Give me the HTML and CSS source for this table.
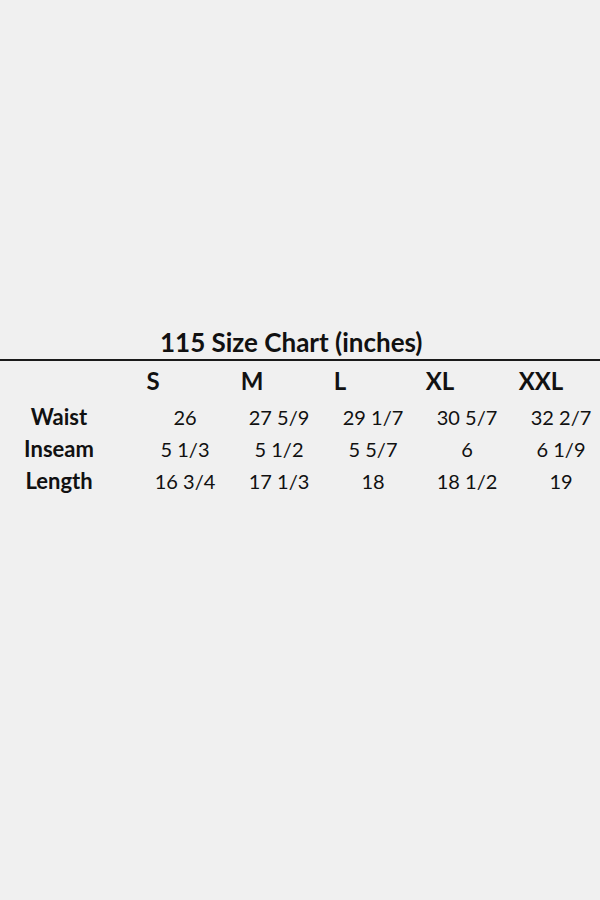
FILE: index.html
```html
<!DOCTYPE html>
<html>
<head>
<meta charset="utf-8">
<link rel="stylesheet" href="styles.css">
</head>
<body>
<div class="chart">
  <div class="title">115 Size Chart (inches)</div>
  <div class="rule"></div>
  <div class="head">
    <span></span><span>S</span><span>M</span><span>L</span><span>XL</span><span>XXL</span>
  </div>
  <div class="row first">
    <span class="label">Waist</span><span>26</span><span>27 5/9</span><span>29 1/7</span><span>30 5/7</span><span>32 2/7</span>
  </div>
  <div class="row">
    <span class="label">Inseam</span><span>5 1/3</span><span>5 1/2</span><span>5 5/7</span><span>6</span><span>6 1/9</span>
  </div>
  <div class="row">
    <span class="label">Length</span><span>16 3/4</span><span>17 1/3</span><span>18</span><span>18 1/2</span><span>19</span>
  </div>
</div>
</body>
</html>
```
FILE: styles.css
```css
html, body {
  margin: 0;
  padding: 0;
  background: #f0f0f0;
}
body {
  width: 600px;
  height: 900px;
  font-family: Lato, "Liberation Sans", sans-serif;
  color: #111;
}
.chart {
  padding-top: 327px;
}
.title {
  font-weight: 700;
  font-size: 26px;
  line-height: 31px;
  padding-left: 160px;
}
.rule {
  height: 2px;
  background: #1a1a1a;
  margin-top: 1px;
}
.head {
  display: grid;
  grid-template-columns: 106px 94px 104px 72px 128px 74px;
  font-weight: 700;
  font-size: 24px;
  line-height: 30px;
  margin-top: 5px;
  text-align: center;
}
.row {
  display: grid;
  grid-template-columns: 118px 20px repeat(5, 94px);
  font-size: 20px;
  line-height: 32px;
  text-align: center;
}
.row.first {
  margin-top: 5px;
}
.row .label {
  grid-column: 1 / 3;
  width: 118px;
  font-weight: 700;
  font-size: 22px;
}
```
